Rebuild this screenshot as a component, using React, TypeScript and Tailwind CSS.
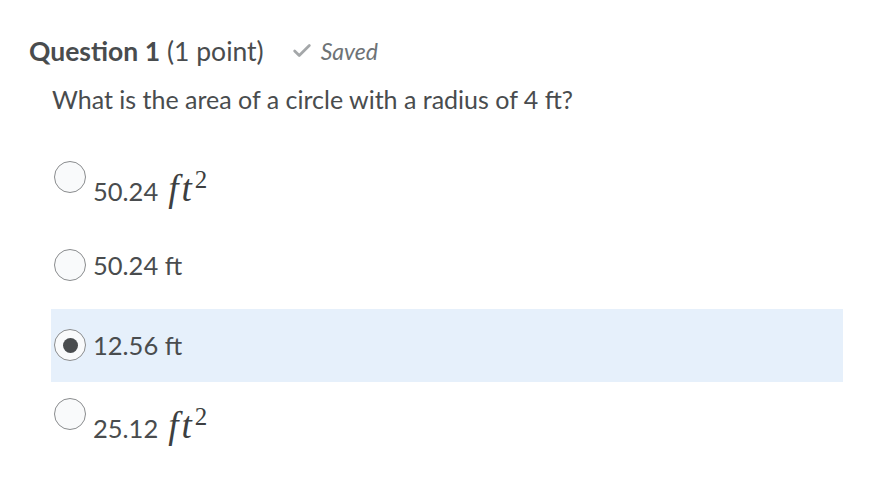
import { Check } from 'lucide-react';

interface Option {
  value: string;
  math?: boolean;
  selected?: boolean;
  top?: string;
}

const options: Option[] = [
  { value: '50.24', math: true, top: 'pt-[12px]' },
  { value: '50.24 ft' },
  { value: '12.56 ft', selected: true },
  { value: '25.12', math: true, top: 'pt-[9px]' },
];

function Radio({ selected }: { selected?: boolean }) {
  return (
    <span className="flex h-[32px] w-[32px] shrink-0 items-center justify-center rounded-full border border-[#8a8c8e] bg-[#f9fafb]">
      {selected && <span className="h-[15px] w-[15px] rounded-full bg-[#494c4e]" />}
    </span>
  );
}

export default function App() {
  return (
    <div className="min-h-screen bg-white pl-[29px] pt-[34px] text-[#494c4e] font-['Lato',sans-serif]">
      <div className="flex items-baseline">
        <h1 className="text-[26.5px] font-bold leading-[34px]">Question 1</h1>
        <span className="ml-[7px] text-[26.5px] leading-[34px]">(1 point)</span>
        <span className="ml-[27px] flex items-center self-center text-[23px] italic text-[#6e7376]">
          <Check className="mr-[8px] h-[22px] w-[22px] text-[#a4a7a9]" strokeWidth={3} />
          Saved
        </span>
      </div>

      <p className="ml-[23px] mt-[14px] text-[25px] leading-[32px]">
        What is the area of a circle with a radius of 4 ft?
      </p>

      <div className="ml-[22px] mr-[26px] mt-[34px] flex flex-col gap-[7px]">
        {options.map((opt, i) => (
          <label
            key={i}
            className={`flex h-[73px] gap-[7px] pl-[3px] ${opt.selected ? 'bg-[#e6f0fb]' : ''} ${opt.math ? `items-start ${opt.top}` : 'items-center'}`}
          >
            <Radio selected={opt.selected} />
            {opt.math ? (
              <span className="mt-[9px] flex items-baseline text-[25.5px] leading-[36px]">
                <span>{opt.value}</span>
                <span className="ml-[10px] font-['Liberation_Serif',serif] text-[37px] italic leading-none tracking-[3px] text-[#3d3f41]">
                  ft
                  <sup className="text-[25px] not-italic tracking-normal">2</sup>
                </span>
              </span>
            ) : (
              <span className="text-[25.5px]">{opt.value}</span>
            )}
          </label>
        ))}
      </div>
    </div>
  );
}
